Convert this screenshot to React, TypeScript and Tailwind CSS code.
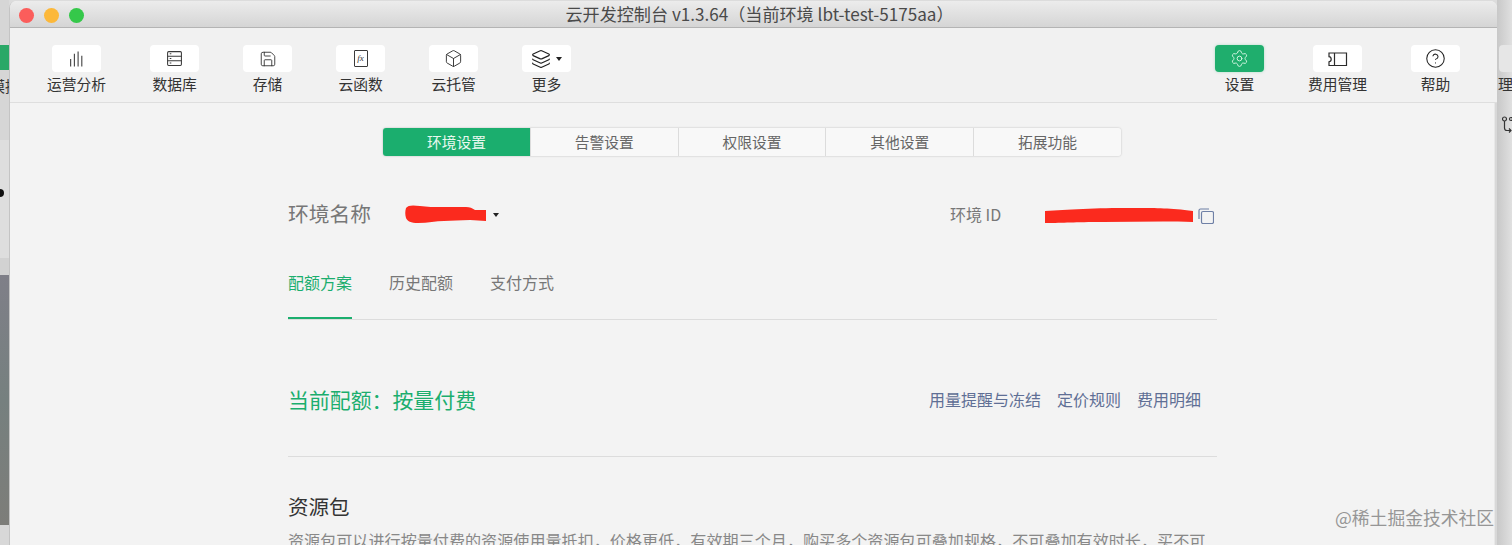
import { Box, CircleHelp, Layers, Save, Settings } from "lucide-react";
import type { ReactNode } from "react";

function BarsIcon() {
  return (
    <svg width="17" height="18" viewBox="0 0 16 16" fill="none" stroke="#3a3a3a" strokeWidth="1">
      <path d="M2.5 15V8M6 15V3M9.5 15V1M13 15V5" />
    </svg>
  );
}

function TableIcon() {
  return (
    <svg width="17" height="17" viewBox="0 0 16 16" fill="none" stroke="#3a3a3a" strokeWidth="1">
      <rect x="1.5" y="1.5" width="13" height="13" rx="1" />
      <path d="M1.5 5.8h13M1.5 10.2h13M3.5 3.6h1.5M3.5 8h1.5M3.5 12.3h1.5" />
    </svg>
  );
}

function FxIcon() {
  return (
    <div className="w-[14px] h-[17px] border border-[#3a3a3a] rounded-[1px] flex items-center justify-center">
      <span className="text-[9px] leading-none italic text-[#333] font-['Liberation_Serif',serif]">fx</span>
    </div>
  );
}

function TicketIcon() {
  return (
    <svg width="21" height="16" viewBox="0 0 20 16" fill="none" stroke="#2b2b2b" strokeWidth="1.2">
      <path d="M1.5 2h17.5v12.5H1.5v-3.7c1.4-.2 2.2-1.2 2.2-2.5S2.900 5.900 1.500 5.700z" />
      <path d="M7 2v12.500" />
    </svg>
  );
}

function ToolItem({ icon, label, active }: { icon: ReactNode; label: string; active?: boolean }) {
  return (
    <div className="flex flex-col items-center min-w-[49px]">
      <div
        className={
          active
            ? "w-[49px] h-[27px] rounded-[4px] bg-[#1fae6d] flex items-center justify-center shadow-[0_0_3px_rgba(31,174,109,0.3)]"
            : "w-[49px] h-[27px] rounded-[4px] bg-white flex items-center justify-center"
        }
      >
        {icon}
      </div>
      <span className="mt-[1px] text-[14.75px] leading-[22px] text-[#333] whitespace-nowrap">{label}</span>
    </div>
  );
}

const segments = ["环境设置", "告警设置", "权限设置", "其他设置", "拓展功能"];

function SegmentBar() {
  return (
    <div className="flex w-[738px] h-[28px] ml-[373px] rounded-[3px] overflow-hidden shadow-[0_0_2px_rgba(0,0,0,0.25)]">
      {segments.map((s, i) => (
        <div
          key={s}
          className={
            i === 0
              ? "flex-1 flex items-center justify-center text-[14.75px] bg-[#1bae6e] text-[#e8f8ef]"
              : "flex-1 flex items-center justify-center text-[14.75px] bg-[#f8f8f8] text-[#666] border-l border-[#dcdcdc]"
          }
        >
          {s}
        </div>
      ))}
    </div>
  );
}

function Caret() {
  return <span className="block w-0 h-0 border-x-[3.5px] border-x-transparent border-t-[4px] border-t-[#222]" />;
}

function Window() {
  return (
    <div className="flex-1 h-[544px] mt-px rounded-t-[7px] overflow-hidden flex flex-col bg-[#f3f3f3] border-l border-[#c4c4c4]">
      {/* title bar */}
      <div className="relative h-[27px] shrink-0 flex items-center justify-center pl-[12px] bg-gradient-to-b from-[#ececec] to-[#d5d5d5] border-b border-[#b4b4b4]">
        <div className="absolute left-[9px] top-[7px] flex gap-[10px]">
          <span className="w-[15px] h-[15px] rounded-full bg-[#fb5d5b]" />
          <span className="w-[15px] h-[15px] rounded-full bg-[#fcb83a]" />
          <span className="w-[15px] h-[15px] rounded-full bg-[#35c84a]" />
        </div>
        <span className="text-[17.100px] text-[#4a4a4a] whitespace-nowrap">
          云开发控制台 v1.3.64（当前环境 lbt-test-5175aa）
        </span>
      </div>

      {/* toolbar */}
      <div className="h-[75px] shrink-0 flex justify-between items-start px-[37px] pt-[17px] bg-[#f1f1f1] border-b border-[#dedede]">
        <div className="flex gap-[44px]">
          <ToolItem icon={<BarsIcon />} label="运营分析" />
          <ToolItem icon={<TableIcon />} label="数据库" />
          <ToolItem icon={<Save size={18} strokeWidth={1.2} color="#333" />} label="存储" />
          <ToolItem icon={<FxIcon />} label="云函数" />
          <ToolItem icon={<Box size={19} strokeWidth={1.2} color="#333" />} label="云托管" />
          <ToolItem
            icon={
              <div className="flex items-center gap-[5px]">
                <Layers size={20} strokeWidth={1.4} color="#222" />
                <Caret />
              </div>
            }
            label="更多"
          />
        </div>
        <div className="flex gap-[44px]">
          <ToolItem active icon={<Settings size={19} strokeWidth={1.2} color="#d6f5e4" />} label="设置" />
          <ToolItem icon={<TicketIcon />} label="费用管理" />
          <ToolItem icon={<CircleHelp size={21} strokeWidth={1.2} color="#222" />} label="帮助" />
        </div>
      </div>

      {/* content, with the pale rail on its right side */}
      <div className="flex-1 flex overflow-hidden">
        <div className="flex-1 overflow-hidden pt-[25px]">
          <SegmentBar />
          <div className="w-[929px] ml-[278px]">
            <div className="mt-[43px] h-[30px] flex items-center justify-between">
              <div className="flex items-center">
                <span className="text-[20.750px] text-[#777]">环境名称</span>
                <svg width="82" height="18" viewBox="0 0 82 18" className="ml-[34px]">
                  <path d="M1 3C3 0 8 0 15 1s14 1 22 1 16 0 24 0c4 0 6 1 9 3h11v11c-6 0-10-1-16-1-10 0-18 1-26 1s-16 2-26 2C6 18 2 16 1 13S0 6 1 3z" fill="#fb2a1e" />
                </svg>
                <span className="ml-[6px] mt-[2px]">
                  <Caret />
                </span>
              </div>
              <div className="flex items-center">
                <span className="text-[16px] text-[#777] w-[95px]">环境 ID</span>
                <svg width="148" height="15" viewBox="0 0 148 15" className="mt-[2px]">
                  <path d="M0 3c12-1 22-1 38-2s28-1 52-1 34 0 58 3v11c-30-1-60 0-90 0s-38 1-58 1z" fill="#fb2a1e" />
                </svg>
                <svg width="16" height="16" viewBox="0 0 16 16" fill="none" stroke="#6f80a6" strokeWidth="1.2" className="ml-[5px] mr-[3px] mt-[3px]">
                  <rect x="3.500" y="3.500" width="12" height="12" rx="1.500" />
                  <path d="M1 11V2.500C1 1.500 1.500 1 2.500 1H11" />
                </svg>
              </div>
            </div>

            <div className="mt-[41px] h-[50px] flex gap-[37px] border-b border-[#dcdcdc]">
              <span className="h-[49px] text-[16px] leading-[24px] text-[#1bae6e] border-b-2 border-[#1bae6e]">配额方案</span>
              <span className="text-[16px] leading-[24px] text-[#777]">历史配额</span>
              <span className="text-[16px] leading-[24px] text-[#777]">支付方式</span>
            </div>

            <div className="pt-[64px] pb-[42px] flex items-center justify-between pr-[16px] border-b border-[#dcdcdc]">
              <span className="text-[20.900px] leading-[30px] text-[#1bae6e]">当前配额：按量付费</span>
              <div className="flex gap-[16px] text-[16px] text-[#5f6f95]">
                <span>用量提醒与冻结</span>
                <span>定价规则</span>
                <span>费用明细</span>
              </div>
            </div>

            <div className="mt-[34px] text-[20.500px] leading-[30px] text-[#333]">资源包</div>
            <div className="mt-[7px] text-[16.100px] leading-[24px] text-[#888] whitespace-nowrap">
              资源包可以进行按量付费的资源使用量抵扣，价格更低，有效期三个月，购买多个资源包可叠加规格，不可叠加有效时长，买不可
            </div>
          </div>
        </div>
        <div className="w-[3px] shrink-0 bg-[#d8d8d8] border-l border-[#e8e8e8]" />
      </div>
    </div>
  );
}

export default function App() {
  return (
    <div className="relative w-[1512px] h-[545px] overflow-hidden flex bg-[#dcdcdc] font-['Noto_Sans_CJK_SC','Noto_Sans',sans-serif]">
      {/* what shows of the desktop, left of the window */}
      <div className="w-[9px] shrink-0 flex flex-col bg-[#d6d6d6] overflow-hidden">
        <div className="mt-[45px] h-[25px] bg-[#2aa867]" />
        <div className="mt-[6px] text-[15px] leading-[20px] text-[#333] -ml-[10px] whitespace-nowrap">模拟</div>
        <div className="mt-[44px] h-[118px] bg-[#dedede] flex items-start">
          <span className="mt-[49px] -ml-[4px] w-[8px] h-[8px] rounded-full bg-[#111]" />
        </div>
        <div className="h-[17px] bg-[#d2d2d2]" />
        <div className="h-[250px] bg-gradient-to-b from-[#7f7f88] via-[#76807f] to-[#7d7d79]" />
        <div className="flex-1 bg-[#d8d8d8]" />
      </div>

      <Window />

      {/* desktop to the right */}
      <div className="w-[15px] shrink-0 flex flex-col items-start bg-gradient-to-r from-[#c8c8c8] to-[#e0e0e0] overflow-hidden">
        <div className="mt-[45px] ml-[2px] w-[20px] h-[27px] rounded-l-[4px] bg-[#e6e6e6]" />
        <div className="mt-[1px] ml-[1px] text-[15px] leading-[22px] text-[#333] whitespace-nowrap">理</div>
        <svg width="14" height="18" viewBox="0 0 14 18" fill="none" stroke="#333" strokeWidth="1.2" className="mt-[21px] ml-[5px]">
          <circle cx="2.500" cy="3" r="2" />
          <circle cx="9" cy="3" r="1.500" />
          <path d="M2.500 5v7c0 1.500 1 2.500 2.500 2.500h4M7 12.500l2 2-2 2" />
        </svg>
      </div>

      <span className="absolute left-[1335px] top-[505px] text-[17.800px] leading-[24px] text-[#969696] whitespace-nowrap">
        @稀土掘金技术社区
      </span>
    </div>
  );
}
